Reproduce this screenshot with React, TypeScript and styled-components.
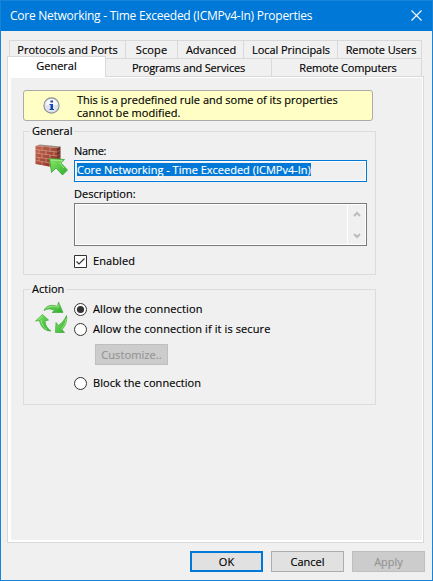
import React from 'react';
import styled, { createGlobalStyle } from 'styled-components';

const GlobalStyle = createGlobalStyle`
  *, *::before, *::after { box-sizing: border-box; }
  body { margin: 0; background: #f0f0f0; overflow: hidden; }
`;

const Dialog = styled.main`
  width: 433px;
  height: 581px;
  display: flex;
  flex-direction: column;
  background: #f0f0f0;
  border: 1px solid #1883d7;
  border-top: 0;
  font: 11px/16px "Open Sans", "Noto Sans", sans-serif;
  color: #000;
  -webkit-text-stroke: 0.15px currentColor;
`;

const TitleBar = styled.header`
  height: 31px;
  margin: 0 -1px;
  flex: none;
  display: flex;
  align-items: center;
  justify-content: space-between;
  padding: 0 10px 0 9px;
  background: #0078d7;
  border: 1px solid #1883d7;
  border-width: 1px 1px 0;
  font-size: 12px;
  color: #fff;
  -webkit-text-stroke: 0;
`;

const Label = styled.span<{ $spacing?: number }>`
  display: block;
  white-space: nowrap;
  letter-spacing: ${(p) => p.$spacing ?? 0}px;
`;

const CloseIcon = styled.svg`
  display: block;
  width: 11px;
  height: 11px;
  margin: -2px 0 0;
`;

const TabRow = styled.div<{ $columns: string; $front?: boolean }>`
  display: grid;
  grid-template-columns: ${(p) => p.$columns};
  flex: none;
  height: 18px;
  margin-left: ${(p) => (p.$front ? 6 : 8)}px;
  margin-top: ${(p) => (p.$front ? 0 : 9)}px;
  width: ${(p) => (p.$front ? 415 : 413)}px;
`;

const Tab = styled.div<{ $inset?: number }>`
  display: flex;
  justify-content: center;
  align-items: center;
  height: 18px;
  padding: 1px 0 0 ${(p) => p.$inset ?? 0}px;
  border: 1px solid #d9d9d9;
  border-width: 1px 1px 0 0;
  &:first-child { border-left-width: 1px; }
`;

const ActiveTab = styled(Tab)`
  position: relative;
  z-index: 1;
  height: 21px;
  margin-top: -2px;
  padding: 0 0 2px;
  background: #fff;
`;

const TabPage = styled.section`
  flex: none;
  width: 417px;
  height: 467px;
  margin-left: 6px;
  padding: 12px 0 0 12px;
  border: 1px solid #d9d9d9;
  background: #f0f0f0;
  box-shadow: inset 3px 0 #fff, inset -1px 0 #fff, inset 0 1px #fff, inset 0 -2px #fff;
`;

const Notice = styled.div`
  display: flex;
  align-items: center;
  width: 350px;
  height: 31px;
  margin: 1px 0 0 3px;
  padding-left: 19px;
  background: #ffffc5;
  border: 1px solid #ababab;
  border-radius: 3px;
`;

const InfoIcon = styled.svg`
  width: 17px;
  height: 17px;
  margin-right: 17px;
`;

const NoticeText = styled.div`
  line-height: 13px;
`;

const Group = styled.fieldset<{ $height: number; $gap: number }>`
  display: flex;
  flex-direction: column;
  width: 353px;
  height: ${(p) => p.$height}px;
  margin: ${(p) => p.$gap}px 0 0 3px;
  padding: 0 8px;
  border: 1px solid #dcdcdc;
`;

const GroupTitle = styled.div`
  align-self: flex-start;
  height: 16px;
  margin: -9px 0 0 -2px;
  padding: 0 2px;
  background: #f0f0f0;
`;

const GroupBody = styled.div`
  display: grid;
  grid-template-columns: 42px 293px;
`;

const GroupIcon = styled.svg<{ $top: number }>`
  display: block;
  width: 36px;
  height: 36px;
  margin: ${(p) => p.$top}px 0 0 2px;
`;

const Fields = styled.div`
  display: flex;
  flex-direction: column;
  align-items: flex-start;
`;

const FieldLabel = styled(Label)`
  margin-top: 4px;
`;

const NameField = styled.div`
  width: 293px;
  height: 22px;
  margin-top: 1px;
  padding: 2px;
  border: 1px solid #0078d7;
  box-shadow: inset 0 0 0 1px #fff;
`;

const Selection = styled.div`
  width: 234px;
  height: 13px;
  line-height: 14px;
  background: #0078d7;
  color: #fff;
`;

const DescriptionField = styled.div`
  display: flex;
  justify-content: flex-end;
  width: 293px;
  height: 43px;
  margin-top: 1px;
  padding: 1px;
  border: 1px solid #7a7a7a;
  box-shadow: inset 0 0 0 1px #fff;
`;

const Scrollbar = styled.div`
  display: flex;
  flex-direction: column;
  align-items: center;
  justify-content: space-between;
  width: 18px;
  padding: 6px 0 5px;
  border-left: 1px solid #fff;
`;

const Chevron = styled.svg`
  display: block;
  width: 8px;
  height: 6px;
`;

const Choice = styled.div<{ $top?: number }>`
  display: flex;
  align-items: center;
  height: 20px;
  margin-top: ${(p) => p.$top ?? 0}px;
`;

const Mark = styled.svg`
  display: block;
  width: 13px;
  height: 13px;
  margin-right: 6px;
`;

const Button = styled.button<{ $primary?: boolean }>`
  display: flex;
  align-items: center;
  justify-content: center;
  width: 73px;
  height: 21px;
  padding: 1px 0 0;
  font: inherit;
  color: #000;
  background: #e1e1e1;
  border: ${(p) => (p.$primary ? '2px solid #0078d7' : '1px solid #adadad')};
  &:disabled { color: #949494; background: #ccc; border-color: #bfbfbf; }
`;

const Indent = styled.div`
  margin: 5px 0 8px 21px;
`;

const Footer = styled.footer`
  display: flex;
  justify-content: flex-end;
  gap: 8px;
  padding: 8px 7px 0 0;
`;

const Radio = ({ checked = false }: { checked?: boolean }) => (
  <Mark viewBox="0 0 13 13">
    <circle cx="6.5" cy="6.5" r="6" fill="#fff" stroke="#333" />
    {checked && <circle cx="6.5" cy="6.5" r="3.6" fill="#333" />}
  </Mark>
);

const WallIcon = () => (
  <GroupIcon viewBox="0 0 36 36" $top={4}>
    <defs>
      <linearGradient id="brick" x1="0" y1="0" x2="1" y2="1">
        <stop offset="0" stopColor="#c5654e" />
        <stop offset="1" stopColor="#8b2e20" />
      </linearGradient>
      <linearGradient id="arrow" x1="0" y1="0" x2="1" y2="1">
        <stop offset="0" stopColor="#8be76a" />
        <stop offset="1" stopColor="#2fae2c" />
      </linearGradient>
    </defs>
    <path d="M1.500 3 6 1.500 26.500 3.500 23 5Z" fill="#a58b80" />
    <path d="M23 5 26.500 3.500V20L23 25Z" fill="#713326" />
    <path d="M1.500 3 23 5V25L1.500 21Z" fill="url(#brick)" />
    <path
      d="M1.500 6.500 23 9M1.500 10 23 13M1.500 14 23 17M1.500 17.500 23 21M8 3.500V7.500M16 4.500V8.500M5 7V10.500M12 8V12M20 8.500V12.500M8 11V15M16 12V16M5 14.500V18M12 15.500V19.500M20 16.500V20.500M8 18.500V22M16 20V24"
      fill="none"
      stroke="#d0a090"
      strokeWidth=".7"
    />
    <path d="M23 9 26.500 7M23 13 26.500 10.500M23 17 26.500 14" stroke="#a67262" strokeWidth=".7" />
    <path d="M15.500 15.500 30.500 16.500 27 20 33.500 27 28.500 32 22 25 17.500 29.500Z" fill="url(#arrow)" stroke="#39a337" strokeWidth=".8" strokeLinejoin="round" />
    <path d="M17.500 17 28.500 17.500 26 20.500 30 25" fill="none" stroke="#b2f297" strokeWidth=".8" />
  </GroupIcon>
);

const CycleIcon = () => (
  <GroupIcon viewBox="0 0 36 36" $top={3}>
    <defs>
      <linearGradient id="leaf" x1="0" y1="0" x2="1" y2="1">
        <stop offset="0" stopColor="#86e76a" />
        <stop offset="1" stopColor="#2bae2d" />
      </linearGradient>
    </defs>
    <g fill="url(#leaf)" stroke="#44a63e" strokeWidth=".7" strokeLinejoin="round">
      <path d="M10 10.500C12 5.500 18 4 23.500 6.500L24.500 2 29 12.500 18 12.500 20.500 10.500C17 8.500 14 8.500 10 10.500Z" />
      <path d="M32.500 15.500C33.500 21 31 26.500 28 29.500L30.500 32.500 21.500 32.500 22 22.500 24.500 25.500C28 23 30.500 20 32.500 15.500Z" />
      <path d="M17 31C10.500 31 6.500 26.500 5.500 20.500L1.500 21 8.500 14.500 14.500 20 11 21C11.500 26 13.500 28.500 17 31Z" />
    </g>
    <g fill="none" stroke="#aef090" strokeWidth=".7">
      <path d="M13 8C17 5.500 21 6 24 7.500L25 4.500" />
      <path d="M32 19C32 23 29.500 27 27 29" />
      <path d="M4 20 8.500 15.500M7 20C7.500 25 10 28 13 29.500" />
    </g>
  </GroupIcon>
);

export default function App() {
  return (
    <Dialog>
      <GlobalStyle />
      <TitleBar>
        <Label $spacing={-0.26}>Core Networking - Time Exceeded (ICMPv4-In) Properties</Label>
        <CloseIcon viewBox="0 0 11 11">
          <path d="M.5.5 10.500 10.500M10.500.5.5 10.500" stroke="#fff" strokeWidth="1.1" />
        </CloseIcon>
      </TitleBar>

      <TabRow $columns="117px 52px 66px 94px 84px">
        <Tab><Label>Protocols and Ports</Label></Tab>
        <Tab><Label $spacing={0.1}>Scope</Label></Tab>
        <Tab $inset={1}><Label>Advanced</Label></Tab>
        <Tab $inset={1}><Label $spacing={-0.05}>Local Principals</Label></Tab>
        <Tab $inset={3}><Label $spacing={-0.1}>Remote Users</Label></Tab>
      </TabRow>
      <TabRow $front $columns="99px 166px 150px">
        <ActiveTab><Label>General</Label></ActiveTab>
        <Tab><Label $spacing={-0.17}>Programs and Services</Label></Tab>
        <Tab $inset={3}><Label $spacing={-0.15}>Remote Computers</Label></Tab>
      </TabRow>

      <TabPage>
        <Notice>
          <InfoIcon viewBox="0 0 17 17">
            <circle cx="8.500" cy="8.500" r="7.600" fill="#dfe3eb" stroke="#8b8f96" strokeWidth="1.100" />
            <path d="M2.500 8A6 6 0 0 1 14.500 8Z" fill="#f7f8fb" />
            <path d="M7.500 3.500H10V5.500H7.500ZM6.500 7H10V12H11V13H6.500V12H7.500V8H6.500Z" fill="#1745b4" />
          </InfoIcon>
          <NoticeText>
            <Label>This is a predefined rule and some of its properties</Label>
            <Label $spacing={0.05}>cannot be modified.</Label>
          </NoticeText>
        </Notice>

        <Group $height={144} $gap={10}>
          <GroupTitle><Label>General</Label></GroupTitle>
          <GroupBody>
            <WallIcon />
            <Fields>
              <FieldLabel $spacing={-0.3}>Name:</FieldLabel>
              <NameField>
                <Selection><Label>Core Networking - Time Exceeded (ICMPv4-In)</Label></Selection>
              </NameField>
              <FieldLabel>Description:</FieldLabel>
              <DescriptionField>
                <Scrollbar>
                  <Chevron viewBox="0 0 8 6"><path d="M1 5 4 2 7 5" fill="none" stroke="#bcbcbc" strokeWidth="2" /></Chevron>
                  <Chevron viewBox="0 0 8 6"><path d="M1 1 4 4 7 1" fill="none" stroke="#bcbcbc" strokeWidth="2" /></Chevron>
                </Scrollbar>
              </DescriptionField>
              <Choice $top={5}>
                <Mark viewBox="0 0 13 13">
                  <path d="M.5.5H12.500V12.500H.5Z" fill="#fff" stroke="#333" />
                  <path d="M2.500 6.500 5 9 10.500 3.500" fill="none" stroke="#333" strokeWidth="1.200" />
                </Mark>
                <Label $spacing={0.1}>Enabled</Label>
              </Choice>
            </Fields>
          </GroupBody>
        </Group>

        <Group $height={116} $gap={14}>
          <GroupTitle><Label>Action</Label></GroupTitle>
          <GroupBody>
            <CycleIcon />
            <Fields>
              <Choice $top={2}><Radio checked /><Label $spacing={0.12}>Allow the connection</Label></Choice>
              <Choice><Radio /><Label $spacing={0.1}>Allow the connection if it is secure</Label></Choice>
              <Indent><Button disabled><Label $spacing={0.1}>Customize..</Label></Button></Indent>
              <Choice><Radio /><Label $spacing={0.05}>Block the connection</Label></Choice>
            </Fields>
          </GroupBody>
        </Group>
      </TabPage>

      <Footer>
        <Button $primary><Label>OK</Label></Button>
        <Button><Label>Cancel</Label></Button>
        <Button disabled><Label>Apply</Label></Button>
      </Footer>
    </Dialog>
  );
}
